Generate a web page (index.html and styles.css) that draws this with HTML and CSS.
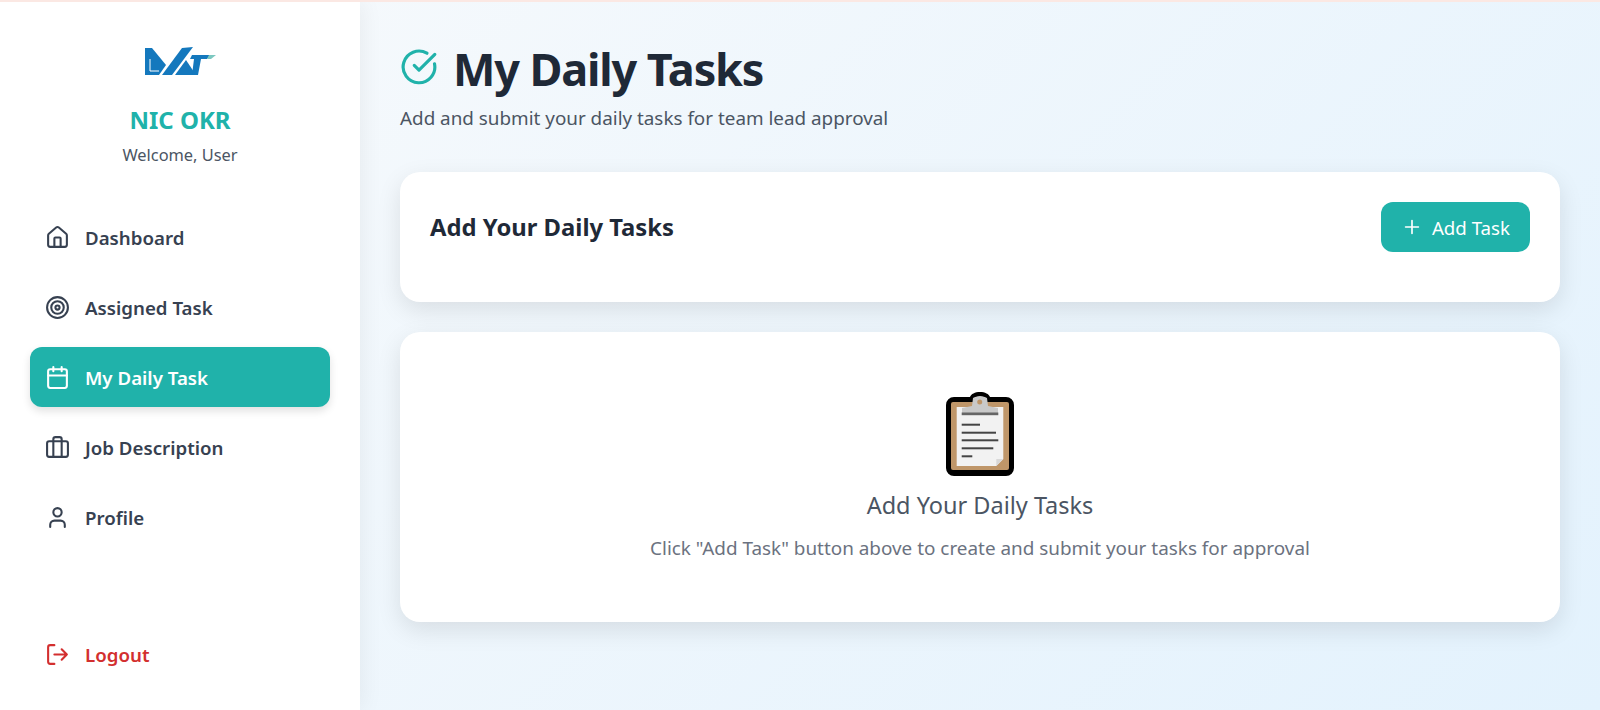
FILE: index.html
```html
<!DOCTYPE html>
<html lang="en">
<head>
  <meta charset="UTF-8" />
  <meta name="viewport" content="width=device-width, initial-scale=1.0"/>
  <title>My Daily Tasks - NIC OKR</title>
  <link rel="stylesheet" href="styles.css">
</head>
<body>

  <aside class="sidebar">
    <div class="brand">
      <svg class="brand-logo" viewBox="0 0 72 29" aria-label="LMKT">
        <path fill="#1478bd" d="M1 1h7l14 17-7 10H1z"/>
        <path fill="none" stroke="#fff" stroke-width="1" d="M6 12v12h9"/>
        <path fill="#1478bd" d="M18 28 38 1l11-1-21 28z"/>
        <path fill="#1478bd" d="M31 28 42 13l10 15z"/>
        <path fill="#1478bd" d="M48 8h18l-3 4h-6l-3 16h-6l2-16h-4z"/>
        <path fill="#7cc8c0" d="M65 8h7l-5 4h-4z"/>
      </svg>
      <h2 class="brand-name">NIC OKR</h2>
      <p class="brand-welcome">Welcome, User</p>
    </div>

    <nav class="nav">
      <a href="#" class="nav-item">
        <svg class="nav-icon" viewBox="0 0 24 24"><path d="M15 21v-8a1 1 0 0 0-1-1h-4a1 1 0 0 0-1 1v8"/><path d="M3 10a2 2 0 0 1 .709-1.528l7-6a2 2 0 0 1 2.582 0l7 6A2 2 0 0 1 21 10v9a2 2 0 0 1-2 2H5a2 2 0 0 1-2-2z"/></svg>
        Dashboard
      </a>
      <a href="#" class="nav-item">
        <svg class="nav-icon" viewBox="0 0 24 24"><circle cx="12" cy="12" r="10"/><circle cx="12" cy="12" r="6"/><circle cx="12" cy="12" r="2"/></svg>
        Assigned Task
      </a>
      <a href="#" class="nav-item active">
        <svg class="nav-icon" viewBox="0 0 24 24"><rect x="3" y="4" width="18" height="18" rx="2"/><path d="M16 2v4M8 2v4M3 10h18"/></svg>
        My Daily Task
      </a>
      <a href="#" class="nav-item">
        <svg class="nav-icon" viewBox="0 0 24 24"><rect x="2" y="6" width="20" height="15" rx="2"/><path d="M16 21V4a2 2 0 0 0-2-2h-4a2 2 0 0 0-2 2v17"/></svg>
        Job Description
      </a>
      <a href="#" class="nav-item">
        <svg class="nav-icon" viewBox="0 0 24 24"><path d="M19 21v-2a4 4 0 0 0-4-4H9a4 4 0 0 0-4 4v2"/><circle cx="12" cy="7" r="4"/></svg>
        Profile
      </a>
    </nav>

    <a href="#" class="nav-item logout">
      <svg class="nav-icon" viewBox="0 0 24 24"><path d="M9 21H5a2 2 0 0 1-2-2V5a2 2 0 0 1 2-2h4"/><path d="m16 17 5-5-5-5M21 12H9"/></svg>
      Logout
    </a>
  </aside>

  <main class="main">
    <header class="page-header">
      <h1 class="page-title">
        <svg class="title-icon" viewBox="0 0 24 24"><path d="M21.8 10A10 10 0 1 1 17 3.3"/><path d="m9 11 3 3L22 4"/></svg>
        My Daily Tasks
      </h1>
      <p class="page-subtitle">Add and submit your daily tasks for team lead approval</p>
    </header>

    <section class="card add-card">
      <h3 class="add-title">Add Your Daily Tasks</h3>
      <button class="add-button">
        <svg class="plus-icon" viewBox="0 0 24 24"><path d="M5 12h14M12 5v14"/></svg>
        Add Task
      </button>
    </section>

    <section class="card empty-card">
      <svg class="clipboard" viewBox="0 0 68 84">
        <path fill="#000" d="M8 5h16c1-3 5-5 10-5s9 2 10 5h16a8 8 0 0 1 8 8v63a8 8 0 0 1-8 8H8a8 8 0 0 1-8-8V13a8 8 0 0 1 8-8z"/>
        <rect x="5" y="10" width="58" height="68" rx="2" fill="#bf9669"/>
        <path fill="#f2f2f2" d="M10.7 15h46.6v52l-7 7H10.7z"/>
        <path fill="#d8d8d8" d="M50.3 74l7-7h-7z"/>
        <path fill="#c9c9c9" d="M27 6c2-1 4-2 7-2s5 1 7 2l1 8 10 2v5H16v-5l10-2z"/>
        <circle cx="33.7" cy="10" r="2.5" fill="#bf9669"/>
        <rect x="15.7" y="20.5" width="36.6" height="2.7" fill="#666"/>
        <rect x="15.7" y="31.7" width="18.3" height="2" fill="#444"/>
        <rect x="15.7" y="39.7" width="34.3" height="2" fill="#444"/>
        <rect x="15.7" y="47.3" width="36.6" height="2" fill="#444"/>
        <rect x="15.7" y="55.3" width="31.6" height="2" fill="#444"/>
        <rect x="15.7" y="63.3" width="10.6" height="2" fill="#444"/>
      </svg>
      <h3 class="empty-title">Add Your Daily Tasks</h3>
      <p class="empty-text">Click "Add Task" button above to create and submit your tasks for approval</p>
    </section>
  </main>

</body>
</html>
```

FILE: styles.css
```css
* {
  box-sizing: border-box;
}

html, body {
  height: 100%;
}

body {
  margin: 0;
  display: flex;
  overflow: hidden;
  font-family: 'Noto Sans', 'Open Sans', sans-serif;
  background: linear-gradient(135deg, #f8fafc 0%, #e3f2fd 100%);
  border-top: 2px solid #fbe8e3;
  color: #1f2937;
}

/* Sidebar */
.sidebar {
  width: 360px;
  flex-shrink: 0;
  display: flex;
  flex-direction: column;
  padding: 45px 30px 0;
  background: #fff;
  box-shadow: 4px 0 20px rgba(0,0,0,0.05);
}

.brand {
  display: flex;
  flex-direction: column;
  align-items: center;
  margin-bottom: 40px;
}

.brand-logo {
  width: 72px;
  height: 29px;
}

.brand-name {
  margin: 26px 0 0;
  font-size: 24px;
  line-height: 36px;
  font-weight: 700;
  color: #20b2aa;
}

.brand-welcome {
  margin: 5px 0 0;
  font-size: 16.4px;
  line-height: 24px;
  color: #4b5563;
}

.nav {
  display: flex;
  flex-direction: column;
  gap: 10px;
}

.nav-item {
  display: flex;
  align-items: center;
  gap: 15px;
  height: 60px;
  padding: 0 15px;
  border-radius: 12px;
  font-size: 18.7px;
  font-weight: 600;
  text-decoration: none;
  color: #374151;
}

.nav-item.active {
  background: #20b2aa;
  color: #fff;
  box-shadow: 0 4px 8px rgba(0,0,0,0.12);
}

.nav-item.logout {
  margin-top: auto;
  margin-bottom: 26px;
  color: #d32f2f;
}

.nav-icon {
  width: 25px;
  height: 25px;
  flex-shrink: 0;
  fill: none;
  stroke: currentColor;
  stroke-width: 2;
  stroke-linecap: round;
  stroke-linejoin: round;
}

/* Main */
.main {
  flex: 1;
  padding: 40px;
}

.page-header {
  margin-bottom: 40px;
}

.page-title {
  display: flex;
  align-items: center;
  gap: 15px;
  margin: 0;
  font-size: 45px;
  line-height: 54px;
  letter-spacing: -1.15px;
  font-weight: 700;
  color: #1f2937;
}

.title-icon {
  width: 38px;
  height: 38px;
  margin-bottom: 4px;
  fill: none;
  stroke: #20b2aa;
  stroke-width: 2;
  stroke-linecap: round;
  stroke-linejoin: round;
}

.page-subtitle {
  margin: 9px 0 0;
  font-size: 18.85px;
  line-height: 27px;
  color: #4b5563;
}

.card {
  background: #fff;
  border-radius: 20px;
  box-shadow: 0 8px 24px rgba(0,0,0,0.1);
}

.add-card {
  display: flex;
  justify-content: space-between;
  align-items: flex-start;
  height: 130px;
  padding: 30px;
  margin-bottom: 30px;
}

.add-title {
  margin: 9px 0 0;
  font-size: 23.8px;
  line-height: 33px;
  font-weight: 700;
  color: #1f2937;
}

.add-button {
  display: flex;
  align-items: center;
  gap: 9px;
  height: 50px;
  padding: 0 20px;
  border: none;
  border-radius: 12px;
  background: #20b2aa;
  color: #fff;
  font-family: inherit;
  font-size: 18.7px;
  cursor: pointer;
}

.plus-icon {
  width: 22px;
  height: 22px;
  fill: none;
  stroke: #fff;
  stroke-width: 1.8;
  stroke-linecap: round;
}

.empty-card {
  display: flex;
  flex-direction: column;
  align-items: center;
  height: 290px;
  padding-top: 60px;
}

.clipboard {
  width: 68px;
  height: 84px;
}

.empty-title {
  margin: 11px 0 0;
  font-size: 23.5px;
  line-height: 36px;
  font-weight: 400;
  color: #4b5563;
}

.empty-text {
  margin: 12px 0 0;
  font-size: 18.9px;
  line-height: 27px;
  color: #6b7280;
}
```
